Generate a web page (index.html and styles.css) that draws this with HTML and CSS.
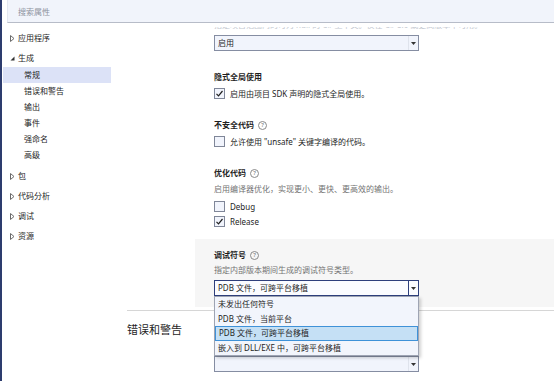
FILE: index.html
```html
<!DOCTYPE html>
<html lang="zh-CN">
<head>
    <meta charset="UTF-8" />
    <title>项目属性</title>
    <link rel="stylesheet" href="styles.css">
</head>
<body>
    <div class="app">
        <div class="search">
            <span class="search-hint">搜索属性</span>
        </div>
        <div class="main">
            <nav class="tree">
                <div class="node">
                    <svg class="caret" width="5" height="7" viewBox="0 0 5 7"><path d="M0.5 0.5 L4 3.5 L0.5 6.5 Z" fill="none" stroke="#6b6b6b" stroke-width="1"/></svg>
                    应用程序
                </div>
                <div class="node">
                    <svg class="caret" width="5" height="7" viewBox="0 0 5 7"><path d="M4.5 1.5 L4.5 5.5 L0.5 5.5 Z" fill="#333"/></svg>
                    生成
                </div>
                <div class="children">
                    <div class="leaf selected">常规</div>
                    <div class="leaf">错误和警告</div>
                    <div class="leaf">输出</div>
                    <div class="leaf">事件</div>
                    <div class="leaf">强命名</div>
                    <div class="leaf">高级</div>
                </div>
                <div class="node">
                    <svg class="caret" width="5" height="7" viewBox="0 0 5 7"><path d="M0.5 0.5 L4 3.5 L0.5 6.5 Z" fill="none" stroke="#6b6b6b" stroke-width="1"/></svg>
                    包
                </div>
                <div class="node">
                    <svg class="caret" width="5" height="7" viewBox="0 0 5 7"><path d="M0.5 0.5 L4 3.5 L0.5 6.5 Z" fill="none" stroke="#6b6b6b" stroke-width="1"/></svg>
                    代码分析
                </div>
                <div class="node">
                    <svg class="caret" width="5" height="7" viewBox="0 0 5 7"><path d="M0.5 0.5 L4 3.5 L0.5 6.5 Z" fill="none" stroke="#6b6b6b" stroke-width="1"/></svg>
                    调试
                </div>
                <div class="node">
                    <svg class="caret" width="5" height="7" viewBox="0 0 5 7"><path d="M0.5 0.5 L4 3.5 L0.5 6.5 Z" fill="none" stroke="#6b6b6b" stroke-width="1"/></svg>
                    资源
                </div>
            </nav>

            <section class="content">
                <div class="prop first">
                    <div class="clip-wrap">
                        <p class="clipped">指定项目范围内的可为 null 的 C# 上下文。仅在 C# 8.0 或更高版本中可用。</p>
                    </div>
                    <div class="select">
                        <span class="select-text">启用</span>
                        <span class="select-btn"><svg width="5" height="3" viewBox="0 0 5 3"><path d="M0 0 H5 L2.5 3 Z" fill="#333"/></svg></span>
                    </div>
                </div>

                <div class="prop">
                    <div class="prop-title">隐式全局使用</div>
                    <div class="check">
                        <span class="box"><svg width="9" height="9" viewBox="0 0 9 9"><path d="M1.5 4.8 L3.5 6.8 L7.5 2" fill="none" stroke="#1e1e1e" stroke-width="1.2"/></svg></span>
                        启用由项目 SDK 声明的隐式全局使用。
                    </div>
                </div>

                <div class="prop">
                    <div class="prop-title">不安全代码 <span class="help">?</span></div>
                    <div class="check">
                        <span class="box"></span>
                        允许使用 "unsafe" 关键字编译的代码。
                    </div>
                </div>

                <div class="prop">
                    <div class="prop-title">优化代码 <span class="help">?</span></div>
                    <div class="desc">启用编译器优化，实现更小、更快、更高效的输出。</div>
                    <div class="check">
                        <span class="box"></span>
                        Debug
                    </div>
                    <div class="check">
                        <span class="box"><svg width="9" height="9" viewBox="0 0 9 9"><path d="M1.5 4.8 L3.5 6.8 L7.5 2" fill="none" stroke="#1e1e1e" stroke-width="1.2"/></svg></span>
                        Release
                    </div>
                </div>

                <div class="prop focused">
                    <div class="prop-title">调试符号 <span class="help">?</span></div>
                    <div class="desc">指定内部版本期间生成的调试符号类型。</div>
                    <div class="select-wrap">
                        <div class="select open">
                            <span class="select-text">PDB 文件，可跨平台移植</span>
                            <span class="select-btn"><svg width="5" height="3" viewBox="0 0 5 3"><path d="M0 0 H5 L2.5 3 Z" fill="#333"/></svg></span>
                        </div>
                        <ul class="dropdown">
                            <li>未发出任何符号</li>
                            <li>PDB 文件，当前平台</li>
                            <li class="active">PDB 文件，可跨平台移植</li>
                            <li>嵌入到 DLL/EXE 中，可跨平台移植</li>
                        </ul>
                    </div>
                </div>

                <div class="section-head">错误和警告</div>

                <div class="prop last">
                    <div class="select">
                        <span class="select-text"></span>
                        <span class="select-btn"><svg width="5" height="3" viewBox="0 0 5 3"><path d="M0 0 H5 L2.5 3 Z" fill="#333"/></svg></span>
                    </div>
                </div>
            </section>
        </div>
    </div>
</body>
</html>
```

FILE: styles.css
```css
body {
    margin: 0;
    font-family: "Noto Sans", "Noto Sans CJK SC", sans-serif;
    font-size: 8px;
    color: #1e1e1e;
    background-color: #ffffff;
    overflow: hidden;
}

.app {
    height: 381px;
    border-left: 2px solid #2d3c6e;
    display: flex;
    flex-direction: column;
    overflow: hidden;
}

.search {
    height: 22px;
    margin-left: 5px;
    background-color: #f1f4fb;
    border-bottom: 1px solid #b7bcc8;
    border-left: 1px solid #e3e7f0;
    display: flex;
    align-items: center;
    position: relative;
    z-index: 2;
}

.search-hint {
    padding-left: 10px;
    color: #8e93a0;
    font-size: 8px;
}

.main {
    flex: 1;
    display: flex;
    overflow: hidden;
}

/* arbre de navigation */
.tree {
    width: 125px;
    flex-shrink: 0;
    padding-top: 7px;
}

.node {
    height: 16px;
    line-height: 16px;
    padding-left: 8px;
    display: flex;
    align-items: center;
    margin-bottom: 4px;
}

.caret {
    width: 5px;
    margin-right: 3px;
}

.children {
    margin-top: -3px;
    margin-bottom: 5px;
}

.leaf {
    height: 16px;
    line-height: 16px;
    margin-left: 1px;
    width: 108px;
    padding-left: 21px;
    box-sizing: border-box;
}

.leaf.selected {
    background-color: #dce2f7;
}

/* contenu */
.content {
    flex: 1;
    min-width: 0;
}

.prop {
    margin-left: 68px;
    padding: 0 19px;
    margin-top: 19px;
}

.prop.first {
    margin-top: 0;
}

/* ligne de description qui défile sous la barre de recherche */
.clip-wrap {
    margin-top: 4px;
    height: 2px;
    overflow: hidden;
}

.clipped {
    margin: -8px 0 0 0;
    line-height: 12px;
    color: #c4c8d0;
    white-space: nowrap;
}

.select {
    width: 205px;
    height: 16px;
    box-sizing: border-box;
    border: 1px solid #858da2;
    background-color: #f1f4fc;
    display: flex;
    align-items: center;
}

.prop.first .select {
    margin-top: 6px;
}

.select-text {
    flex: 1;
    padding-left: 3px;
    line-height: 14px;
}

.select-btn {
    width: 9px;
    height: 14px;
    border-left: 1px solid #dfe3ec;
    display: flex;
    align-items: center;
    justify-content: center;
}

.select.open {
    border-color: #2e3f7c;
    background-color: #fbfcff;
}

.select.open .select-btn {
    border-left-color: #2e3f7c;
}

.prop-title {
    font-weight: bold;
    line-height: 14px;
    display: flex;
    align-items: center;
    gap: 4px;
}

.help {
    width: 7px;
    height: 7px;
    border: 1px solid #8a8a8a;
    border-radius: 50%;
    font-size: 6px;
    line-height: 7px;
    text-align: center;
    font-weight: normal;
    color: #6a6a6a;
}

.desc {
    margin-top: 3px;
    line-height: 12px;
    color: #737373;
}

.check {
    margin-top: 3px;
    height: 12px;
    display: flex;
    align-items: center;
    gap: 5px;
}

.desc + .check {
    margin-top: 5px;
}

.box {
    width: 11px;
    height: 11px;
    box-sizing: border-box;
    border: 1px solid #7f8698;
    background-color: #f1f4fc;
    display: flex;
    align-items: center;
    justify-content: center;
}

.prop.focused {
    margin-top: 12px;
    margin-right: 0;
    padding-top: 9px;
    padding-bottom: 11px;
    background-color: #f6f6f6;
}

.prop.focused .desc {
    margin-top: 2px;
}

.select-wrap {
    position: relative;
    margin-top: 4px;
    width: 205px;
}

.dropdown {
    position: absolute;
    top: 100%;
    left: 0;
    width: 205px;
    box-sizing: border-box;
    margin: 0;
    padding: 0;
    list-style: none;
    background-color: #f2f5fc;
    border: 1px solid #9ea4b3;
    box-shadow: 2px 2px 3px rgba(0, 0, 0, 0.18);
    z-index: 3;
}

.dropdown li {
    height: 14.5px;
    line-height: 14.5px;
    padding-left: 3px;
    box-sizing: border-box;
}

.dropdown li.active {
    background-color: #c5e0f5;
    border: 1px solid #3f92d8;
    line-height: 12.5px;
}

.section-head {
    margin-top: 3px;
    border-top: 1px solid #d6d6d6;
    padding-top: 11px;
    font-size: 11px;
    line-height: 16px;
}

.prop.last {
    margin-top: 18px;
}
```
